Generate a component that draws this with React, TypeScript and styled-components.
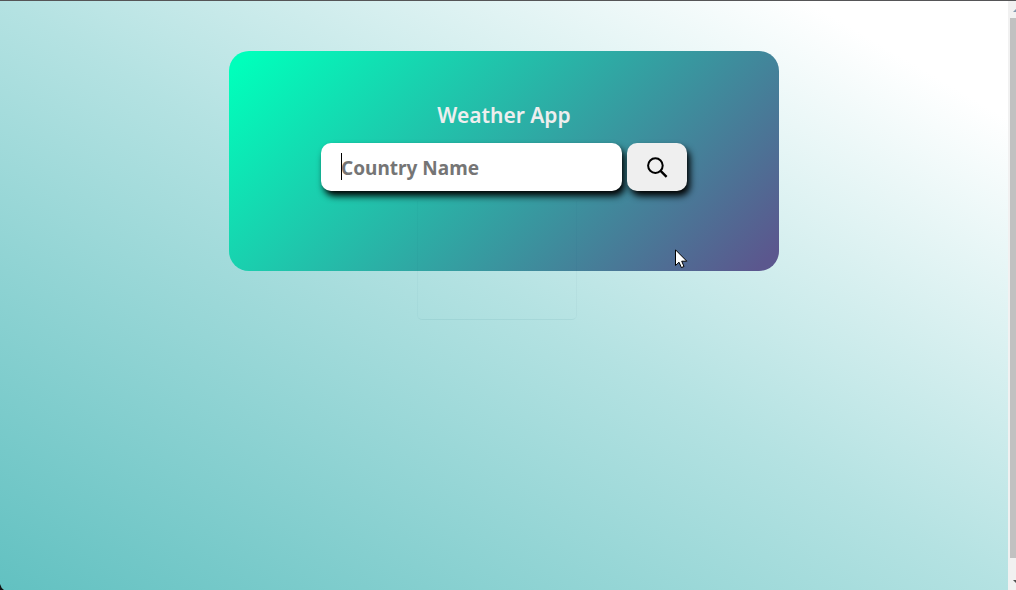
import React from "react";
import styled, { createGlobalStyle } from "styled-components";

const GlobalStyle = createGlobalStyle`
  *, *::before, *::after { box-sizing: border-box; }
  body {
    margin: 0;
    font-family: "Noto Sans", "Open Sans", sans-serif;
    overflow: hidden;
  }
`;

const Window = styled.div`
  position: relative;
  display: flex;
  min-height: 100vh;
  border-top: 1px solid #555557;
`;

const Page = styled.main`
  flex: 1;
  display: flex;
  flex-direction: column;
  align-items: center;
  padding: 50px 20px;
  background: linear-gradient(to top right, #62c1c1, #b4e2e2 50%, #ffffff 90%);
`;

const Card = styled.form`
  position: relative;
  display: flex;
  flex-direction: column;
  align-items: center;
  gap: 12px;
  width: 100%;
  max-width: 550px;
  padding: 48px 20px 80px;
  border-radius: 20px;
  background: linear-gradient(135deg, #00ffbb 3%, #5b578e 97%);
`;

const Title = styled.h1`
  margin: 0;
  color: #eeeeee;
  font-size: 21px;
  line-height: 32px;
  font-weight: 600;
`;

const SearchRow = styled.div`
  display: flex;
  gap: 5px;
  height: 48px;
`;

const Field = styled.label`
  position: relative;
  display: flex;
`;

const SearchInput = styled.input`
  width: 301px;
  padding: 2px 20px 0;
  border: 0;
  border-radius: 10px;
  outline: 0;
  background: #ffffff;
  box-shadow: 3px 5px 7px #000000;
  font-family: inherit;
  font-size: 19px;
  font-weight: 700;
  &::placeholder { color: #757575; opacity: 1; }
`;

const Caret = styled.span`
  position: absolute;
  left: 20px;
  top: 10px;
  width: 1px;
  height: 27px;
  background: #000000;
`;

const SearchButton = styled.button`
  position: relative;
  display: flex;
  align-items: center;
  justify-content: center;
  width: 60px;
  padding: 0;
  border: 0;
  border-radius: 10px;
  background: #efefef;
  box-shadow: 3px 5px 7px #000000;
`;

const ResultOutline = styled.div`
  position: absolute;
  top: 150px;
  left: 188px;
  width: 160px;
  height: 119px;
  border: 1px solid rgba(0, 90, 100, 0.03);
  border-top: 0;
  border-bottom-color: rgba(0, 90, 100, 0.07);
  border-radius: 0 0 5px 5px;
  pointer-events: none;
`;

const Pointer = styled.svg`
  position: absolute;
  left: 446px;
  top: 198px;
`;

const ScrollTrack = styled.div`
  display: flex;
  flex-direction: column;
  width: 8px;
  background: #f1f1f1;
  overflow: hidden;
`;

const ScrollThumb = styled.div`
  flex: 1;
  margin-left: 2px;
  background: #c1c1c1;
`;

const ScrollArrow = styled.svg<{ $end?: boolean }>`
  flex: none;
  width: 8px;
  height: ${(p) => (p.$end ? 32 : 17)}px;
`;

const WindowCorner = styled.svg`
  position: absolute;
  left: 0;
  bottom: 0;
`;

export default function App() {
  return (
    <>
      <GlobalStyle />
      <Window>
        <Page>
          <Card onSubmit={(e) => e.preventDefault()}>
            <Title>Weather App</Title>
            <SearchRow>
              <Field>
                <SearchInput type="text" placeholder="Country Name" aria-label="Country Name" />
                <Caret />
              </Field>
              <SearchButton type="submit" aria-label="Search">
                <svg width="22" height="22" viewBox="0 0 22 22" fill="none" stroke="#000">
                  <circle cx="9.4" cy="9.6" r="7.3" strokeWidth="2" />
                  <path d="M14.6 14.8L20.6 20.8" strokeWidth="2.4" />
                </svg>
              </SearchButton>
            </SearchRow>
            <ResultOutline />
            <Pointer width="13" height="20" viewBox="0 0 13 20" aria-hidden="true">
              <path
                d="M.5 .8V16.5L4 13.2L6.4 18.6L9 17.5L6.7 12.2H11.8Z"
                fill="#fff"
                stroke="#000"
              />
            </Pointer>
          </Card>
        </Page>
        <ScrollTrack aria-hidden="true">
          <ScrollArrow viewBox="0 0 8 17">
            <path d="M5 11H8V8Z" fill="#8497ac" />
          </ScrollArrow>
          <ScrollThumb />
          <ScrollArrow $end viewBox="0 0 8 32">
            <path d="M5 22H8V25Z" fill="#505050" />
          </ScrollArrow>
        </ScrollTrack>
        <WindowCorner width="4" height="6" viewBox="0 0 4 6" aria-hidden="true">
          <path d="M0 0Q1 4 4 6H0Z" fill="#111" />
        </WindowCorner>
      </Window>
    </>
  );
}
